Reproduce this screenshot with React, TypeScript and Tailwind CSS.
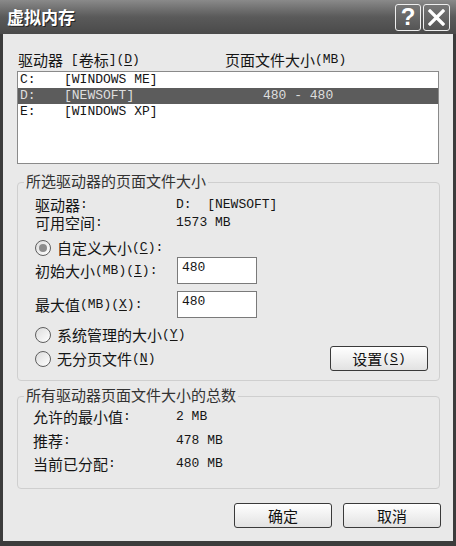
import React from "react";

type Seg = { t: string; a: boolean; u: boolean };

function T({ s }: { s: string }) {
  const segs: Seg[] = [];
  for (let i = 0; i < s.length; i++) {
    let c = s[i];
    let u = false;
    if (c === "&") {
      i++;
      c = s[i];
      u = true;
    }
    const a = c.charCodeAt(0) < 128;
    const last = segs[segs.length - 1];
    if (last && last.a === a && !last.u && !u) last.t += c;
    else segs.push({ t: c, a, u });
  }
  return (
    <>
      {segs.map((g, i) => (
        <span
          key={i}
          className={
            (g.a
              ? "inline-block leading-[16px] align-middle font-[family-name:'Liberation_Mono',monospace] text-[13px] whitespace-pre"
              : "inline-block leading-[16px] align-middle text-[15px] whitespace-pre") +
            (g.u ? " underline underline-offset-2" : "")
          }
        >
          {g.t}
        </span>
      ))}
    </>
  );
}

function Radio({ on }: { on?: boolean }) {
  return (
    <div className="w-[16px] h-[16px] rounded-full border border-[#5e5e5e] bg-gradient-to-br from-[#dcdcdc] to-[#ffffff] flex items-center justify-center shrink-0">
      {on && <div className="w-[8px] h-[8px] rounded-full bg-[#8c8c8c]" />}
    </div>
  );
}

function Btn({ s, w }: { s: string; w: string }) {
  return (
    <div
      className={
        w +
        " h-[25px] rounded-[3px] border border-[#3a3a3a] bg-gradient-to-b from-[#ffffff] to-[#e2e2e2] flex items-center justify-center leading-[16px] text-[#111]"
      }
    >
      <div className="flex items-center">
        <T s={s} />
      </div>
    </div>
  );
}

function Group({ title, children, cls }: { title: string; children: React.ReactNode; cls: string }) {
  return (
    <div className={"relative border border-[#cfcfcf] rounded-[4px] " + cls}>
      <div className="absolute left-[6px] top-[-11px] bg-[#e9e9e9] px-[2px] h-[18px] flex items-center text-[#333]">
        <T s={title} />
      </div>
      {children}
    </div>
  );
}

function Row({ label, value, lw, cls }: { label: string; value: string; lw: string; cls?: string }) {
  return (
    <div className={"flex h-[18px] items-center " + (cls || "")}>
      <div className={lw + " flex items-center"}>
        <T s={label} />
      </div>
      <div className="flex items-center">
        <T s={value} />
      </div>
    </div>
  );
}

export default function App() {
  return (
    <div className="w-[456px] h-[546px] bg-[#3c3c3c] flex flex-col font-[family-name:'Noto_Sans_CJK_SC',sans-serif] text-[#151515] overflow-hidden">
      {/* title bar */}
      <div className="h-[34px] bg-gradient-to-b from-[#8a8a8a] via-[#5a5a5a] to-[#4a4a4a] flex items-center pl-[7px] pr-[6px] shrink-0">
        <div className="text-white font-bold text-[17px] leading-[20px] flex-1 [text-shadow:1px_1px_0_#222]">
          虚拟内存
        </div>
        <div className="flex gap-[2px] items-center">
          <div className="w-[26px] h-[27px] rounded-[3px] border border-[#eeeeee] bg-gradient-to-b from-[#777] to-[#555] flex items-center justify-center">
            <span className="text-white font-bold text-[24px] leading-[22px] font-[family-name:'Liberation_Sans',sans-serif]">?</span>
          </div>
          <div className="w-[27px] h-[27px] rounded-[3px] border border-[#eeeeee] bg-gradient-to-b from-[#777] to-[#555] flex items-center justify-center">
            <svg width="17" height="17" viewBox="0 0 17 17">
              <path d="M2 2 L15 15 M15 2 L2 15" stroke="#fff" strokeWidth="3.2" strokeLinecap="square" />
            </svg>
          </div>
        </div>
      </div>

      {/* body */}
      <div className="flex-1 mx-[3px] mb-[5px] bg-[#e9e9e9] flex flex-col pl-[14px] pt-[17px]">
        <div className="flex items-center h-[18px] pl-[1px]">
          <div className="w-[207px] flex items-center">
            <T s="驱动器 [卷标](&D)" />
          </div>
          <div className="flex items-center">
            <T s="页面文件大小(MB)" />
          </div>
        </div>

        {/* listbox */}
        <div className="mt-[2px] w-[422px] h-[93px] bg-white border border-[#8a8a8a] flex flex-col">
          {[
            ["C:", "[WINDOWS ME]", ""],
            ["D:", "[NEWSOFT]", "480 - 480"],
            ["E:", "[WINDOWS XP]", ""],
          ].map((r, i) => (
            <div
              key={i}
              className={
                "h-[16px] flex items-center pl-[2px] font-[family-name:'Liberation_Mono',monospace] text-[13px] leading-[16px] whitespace-pre " +
                (i === 1 ? "bg-[#5c5c5c] text-[#dedede]" : "text-[#151515]")
              }
            >
              <div className="w-[44px]">{r[0]}</div>
              <div className="w-[199px]">{r[1]}</div>
              <div>{r[2]}</div>
            </div>
          ))}
        </div>

        {/* group 1 */}
        <Group title="所选驱动器的页面文件大小" cls="mt-[18px] w-[423px] h-[199px] pl-[17px] pt-[13px]">
          <Row label="驱动器:" value="D:  [NEWSOFT]" lw="w-[141px]" />
          <Row label="可用空间:" value="1573 MB" lw="w-[141px]" />
          <div className="flex h-[18px] items-center gap-[6px] mt-[7px]">
            <Radio on />
            <div className="flex items-center">
              <T s="自定义大小(&C):" />
            </div>
          </div>
          <div className="flex h-[27px] items-center">
            <div className="w-[142px] flex items-center">
              <T s="初始大小(MB)(&I):" />
            </div>
            <div className="w-[80px] h-[27px] bg-white border border-[#7a7a7a] pl-[4px] pt-[2px] leading-[16px] font-[family-name:'Liberation_Mono',monospace] text-[13px]">
              480
            </div>
          </div>
          <div className="flex h-[27px] items-center mt-[7px]">
            <div className="w-[142px] flex items-center">
              <T s="最大值(MB)(&X):" />
            </div>
            <div className="w-[80px] h-[27px] bg-white border border-[#7a7a7a] pl-[4px] pt-[2px] leading-[16px] font-[family-name:'Liberation_Mono',monospace] text-[13px]">
              480
            </div>
          </div>
          <div className="flex h-[18px] items-center gap-[6px] mt-[8px]">
            <Radio />
            <div className="flex items-center">
              <T s="系统管理的大小(&Y)" />
            </div>
          </div>
          <div className="flex h-[25px] items-center mt-[2px] pr-[11px]">
            <div className="flex items-center gap-[6px] flex-1">
              <Radio />
              <div className="flex items-center">
                <T s="无分页文件(&N)" />
              </div>
            </div>
            <Btn s="设置(&S)" w="w-[98px]" />
          </div>
        </Group>

        {/* group 2 */}
        <Group title="所有驱动器页面文件大小的总数" cls="mt-[15px] w-[423px] h-[93px] pl-[15px] pt-[11px]">
          <Row label="允许的最小值:" value="2 MB" lw="w-[143px]" />
          <Row label="推荐:" value="478 MB" lw="w-[143px]" cls="mt-[6px]" />
          <Row label="当前已分配:" value="480 MB" lw="w-[143px]" cls="mt-[5px]" />
        </Group>

        <div className="flex justify-end gap-[11px] mt-[14px] pr-[12px]">
          <Btn s="确定" w="w-[98px]" />
          <Btn s="取消" w="w-[98px]" />
        </div>
      </div>
    </div>
  );
}
